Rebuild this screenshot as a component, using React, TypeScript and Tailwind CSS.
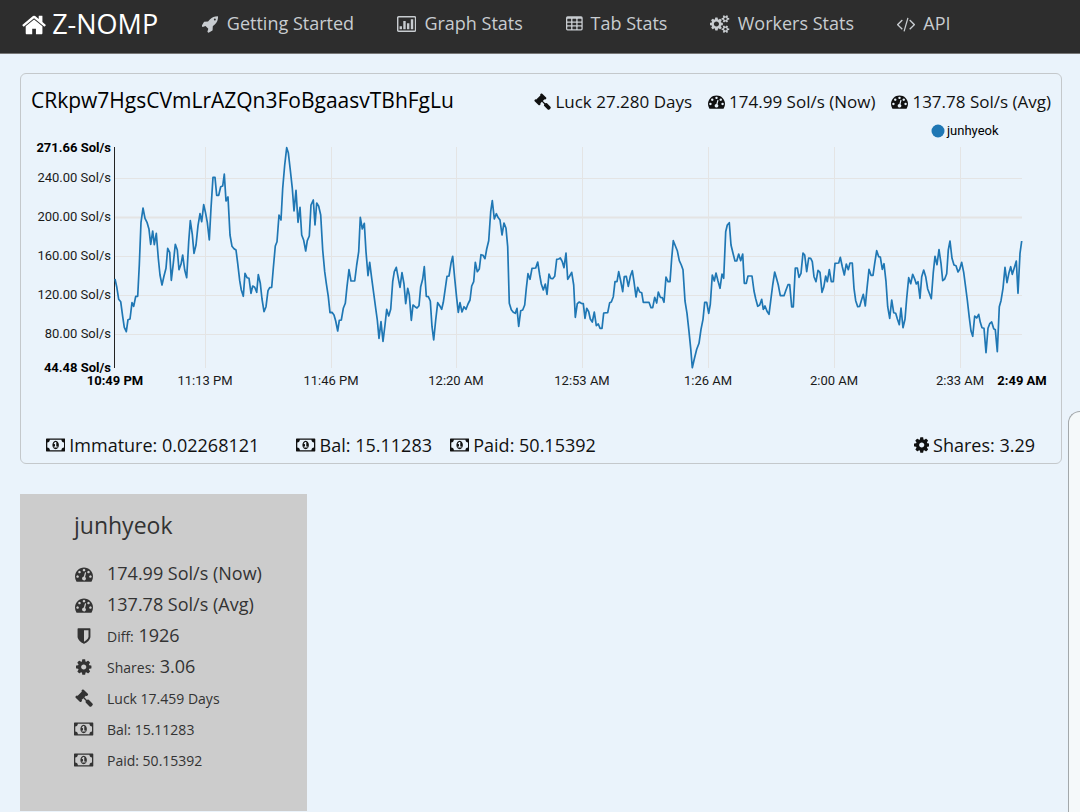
import type { ReactNode } from "react";

type Glyph = { box: string; d: string };

const cell = (x: number, y: number) => `M${x + 32} ${y}h320q32 0 32 32v192q0 32-32 32h-320q-32 0-32-32v-192q0-32 32-32z`;

const icons = {
  home: {
    box: "64 0 1664 1792",
    d: "M1472 992v480q0 26-19 45t-45 19h-384v-384h-256v384h-384q-26 0-45-19t-19-45v-480q0-1 .5-3t.5-3l575-474 575 474q1 2 1 6zm223-69l-62 74q-8 9-21 11h-3q-13 0-21-7l-692-577-692 577q-12 8-24 7-13-2-21-11l-62-74q-8-10-7-23.5t11-21.5l719-599q32-26 76-26t76 26l244 204v-195q0-14 9-23t23-9h192q14 0 23 9t9 23v408l219 182q10 8 11 21.5t-7 23.5z",
  },
  rocket: {
    box: "64 0 1664 1792",
    d: "M1440 448q0-40-28-68t-68-28-68 28-28 68 28 68 68 28 68-28 28-68zm224-288q0 249-75.5 430.5t-253.5 360.5q-81 80-195 176l-20 379q-2 16-16 26l-384 224q-7 4-16 4-12 0-23-9l-64-64q-13-14-8-32l85-276-281-281-276 85q-3 1-9 1-14 0-23-9l-64-64q-17-19-5-39l224-384q10-14 26-16l379-20q96-114 176-195 188-187 358-258t431-71q14 0 24 9.5t10 22.5z",
  },
  chart: {
    box: "0 0 1920 1792",
    d: "M160 96h1600q66 0 113 47t47 113v1280q0 66-47 113t-113 47h-1600q-66 0-113-47t-47-113v-1280q0-66 47-113t113-47zM176 240q-32 0-32 32v1248q0 32 32 32h1568q32 0 32-32v-1248q0-32-32-32zM256 1120h240v288h-240zM624 608h240v800h-240zM992 832h240v576h-240zM1376 416h240v992h-240z",
  },
  table: {
    box: "64 0 1664 1792",
    d:
      "M224 128h1344q160 0 160 160v1088q0 160-160 160h-1344q-160 0-160-160v-1088q0-160 160-160z" +
      [192, 704, 1216].map((x) => [384, 768, 1152].map((y) => cell(x, y)).join("")).join(""),
  },
  cogs: {
    box: "0 0 1920 1792",
    d: "M896 896q0-106-75-181t-181-75-181 75-75 181 75 181 181 75 181-75 75-181zm768 512q0-52-38-90t-90-38-90 38-38 90q0 53 37.5 90.5t90.5 37.5 90.5-37.5 37.5-90.5zm0-1024q0-52-38-90t-90-38-90 38-38 90q0 53 37.5 90.5t90.5 37.5 90.5-37.5 37.5-90.5zm-384 421v185q0 10-7 19.5t-16 10.5l-155 24q-11 35-32 76 34 48 90 115 7 11 7 20 0 12-7 19-23 30-82.5 89.5t-78.5 59.5q-11 0-21-7l-115-90q-37 19-77 31-11 108-23 155-7 24-30 24h-186q-11 0-20-7.5t-10-17.5l-23-153q-34-10-75-31l-118 89q-7 7-20 7-11 0-21-8-144-133-144-160 0-9 7-19 10-14 41-53t47-61q-23-44-35-82l-152-24q-10-1-17-9.5t-7-19.5v-185q0-10 7-19.5t16-10.5l155-24q11-35 32-76-34-48-90-115-7-11-7-20 0-12 7-20 22-30 82-89t79-59q11 0 21 7l115 90q34-18 77-32 11-108 23-154 7-24 30-24h186q11 0 20 7.5t10 17.5l23 153q34 10 75 31l118-89q8-7 20-7 11 0 21 8 144 133 144 160 0 8-7 19-12 16-42 54t-45 60q23 48 34 82l152 23q10 2 17 10.5t7 19.5zm640 533v140q0 16-149 31-12 27-30 52 51 113 51 138 0 4-4 7-122 71-124 71-8 0-46-47t-52-68q-20 2-30 2t-30-2q-14 21-52 68t-46 47q-2 0-124-71-4-3-4-7 0-25 51-138-18-25-30-52-149-15-149-31v-140q0-16 149-31 13-29 30-52-51-113-51-138 0-4 4-7 4-2 35-20t59-34 30-16q8 0 46 46.5t52 67.5q20-2 30-2t30 2q51-71 92-112l6-2q4 0 124 70 4 3 4 7 0 25-51 138 17 23 30 52 149 15 149 31zm0-1024v140q0 16-149 31-12 27-30 52 51 113 51 138 0 4-4 7-122 71-124 71-8 0-46-47t-52-68q-20 2-30 2t-30-2q-14 21-52 68t-46 47q-2 0-124-71-4-3-4-7 0-25 51-138-18-25-30-52-149-15-149-31v-140q0-16 149-31 13-29 30-52-51-113-51-138 0-4 4-7 4-2 35-20t59-34 30-16q8 0 46 46.5t52 67.5q20-2 30-2t30 2q51-71 92-112l6-2q4 0 124 70 4 3 4 7 0 25-51 138 17 23 30 52 149 15 149 31z",
  },
  code: {
    box: "0 0 1820 1792",
    d: "M553 1399l-50 50q-10 10-23 10t-23-10l-466-466q-10-10-10-23t10-23l466-466q10-10 23-10t23 10l50 50q10 10 10 23t-10 23l-393 393 393 393q10 10 10 23t-10 23zm591-1067l-373 1291q-4 13-15.5 19.5t-23.5 2.5l-62-17q-13-4-19.5-15.5t-2.5-24.5l373-1291q4-13 15.5-19.5t23.5-2.5l62 17q13 4 19.5 15.5t2.5 24.5zm657 651l-466 466q-10 10-23 10t-23-10l-50-50q-10-10-10-23t10-23l393-393-393-393q-10-10-10-23t10-23l50-50q10-10 23-10t23 10l466 466q10 10 10 23t-10 23z",
  },
  cog: {
    box: "128 0 1536 1792",
    d: "M1152 896q0-106-75-181t-181-75-181 75-75 181 75 181 181 75 181-75 75-181zm512-109v222q0 12-8 23t-20 13l-185 28q-19 54-39 91 35 50 107 138 10 12 10 25t-9 23q-27 37-99 108t-94 71q-12 0-26-9l-138-108q-44 23-91 38-16 136-29 186-7 28-36 28h-222q-14 0-24.5-8.5t-11.5-21.5l-28-184q-49-16-90-37l-141 107q-10 9-25 9-14 0-25-11-126-114-165-168-7-10-7-23 0-12 8-23 15-21 51-66.5t54-70.5q-27-50-41-99l-183-27q-13-2-21-12.5t-8-23.5v-222q0-12 8-23t19-13l186-28q14-46 39-92-40-57-107-138-10-12-10-24 0-10 9-23 26-36 98.5-107.5t94.5-71.5q13 0 26 10l138 107q44-23 91-38 16-136 29-186 7-28 36-28h222q14 0 24.5 8.5t11.5 21.5l28 184q49 16 90 37l142-107q9-9 24-9 13 0 25 10 129 119 165 170 7 8 7 22 0 12-8 23-15 21-51 66.5t-54 70.5q26 50 41 98l183 28q13 2 21 12.5t8 23.5z",
  },
  gavel: {
    box: "0 0 1792 1792",
    d: "M1771 1536q0 53-37 90l-107 108q-39 37-91 37-53 0-90-37l-363-364q-38-36-38-90 0-53 43-96l-256-256-126 126q-14 14-34 14t-34-14q2 2 12.5 12t12.5 13 10 11.5 10 13.5 6 13.5 5.5 16.5 1.5 18q0 38-28 68-3 3-16.5 18t-19 20.5-18.5 16.5-22 15.5-22 9-26 4.5q-40 0-68-28l-408-408q-28-28-28-68 0-13 4.5-26t9-22 15.5-22 16.5-18.5 20.5-19 18-16.5q30-28 68-28 10 0 18 1.5t16.5 5.5 13.5 6 13.5 10 11.5 10 13 12.5 12 12.5q-14-14-14-34t14-34l348-348q14-14 34-14t34 14q-2-2-12.5-12t-12.5-13-10-11.5-10-13.5-6-13.5-5.5-16.5-1.5-18q0-38 28-68 3-3 16.5-18t19-20.5 18.5-16.5 22-15.5 22-9 26-4.5q40 0 68 28l408 408q28 28 28 68 0 13-4.5 26t-9 22-15.5 22-16.5 18.5-20.5 19-18 16.5q-30 28-68 28-10 0-18-1.5t-16.5-5.5-13.5-6-13.5-10-11.5-10-13-12.5-12-12.5q14 14 14 34t-14 34l-126 126 256 256q43-43 96-43 52 0 91 37l363 363q37 39 37 91z",
  },
  gauge: {
    box: "0 0 1792 1792",
    d: "M384 1152q0-53-37.5-90.5t-90.5-37.5-90.5 37.5-37.5 90.5 37.5 90.5 90.5 37.5 90.5-37.5 37.5-90.5zm192-448q0-53-37.5-90.5t-90.5-37.5-90.5 37.5-37.5 90.5 37.5 90.5 90.5 37.5 90.5-37.5 37.5-90.5zm428 481l101-382q6-26-7.5-48.5t-38.5-29.5-48 6.5-30 39.5l-101 382q-60 5-107 43.5t-63 98.5q-20 77 20 146t117 89 146-20 89-117q16-60-6-117t-72-91zm660-33q0-53-37.5-90.5t-90.5-37.5-90.5 37.5-37.5 90.5 37.5 90.5 90.5 37.5 90.5-37.5 37.5-90.5zm-640-640q0-53-37.5-90.5t-90.5-37.5-90.5 37.5-37.5 90.5 37.5 90.5 90.5 37.5 90.5-37.5 37.5-90.5zm448 192q0-53-37.5-90.5t-90.5-37.5-90.5 37.5-37.5 90.5 37.5 90.5 90.5 37.5 90.5-37.5 37.5-90.5zm320 448q0 261-141 483-19 29-54 29h-1402q-35 0-54-29-141-221-141-483 0-182 71-348t191-286 286-191 348-71 348 71 286 191 191 286 71 348z",
  },
  shield: {
    box: "0 0 1792 1792",
    d: "M1344 960v-640h-448v1137q119-63 213-137 235-184 235-360zm192-768v768q0 86-33.5 170.5t-83 150-118 127.5-126.5 103-121 77.5-89.5 49.5-42.5 20q-12 6-26 6t-26-6q-16-7-42.5-20t-89.5-49.5-121-77.5-126.5-103-118-127.5-83-150-33.5-170.5v-768q0-26 19-45t45-19h1152q26 0 45 19t19 45z",
  },
  money: {
    box: "0 0 1920 1792",
    d: "M768 1152h384v-96h-128v-448h-114l-148 137 77 80q42-37 55-57h2v288h-128v96zm512-256q0 70-21 142t-59.5 134-101.5 101-138 39-138-39-101.5-101-59.5-134-21-142 21-142 59.5-134 101.5-101 138-39 138 39 101.5 101 59.5 134 21 142zm512 256v-512q-106 0-181-75t-75-181h-1152q0 106-75 181t-181 75v512q106 0 181 75t75 181h1152q0-106 75-181t181-75zm128-832v1152q0 26-19 45t-45 19h-1792q-26 0-45-19t-19-45v-1152q0-26 19-45t45-19h1792q26 0 45 19t19 45z",
  },
} satisfies Record<string, Glyph>;

type IconName = keyof typeof icons;

function Icon({ name, className = "h-[18px]" }: { name: IconName; className?: string }) {
  return (
    <svg viewBox={icons[name].box} className={`w-auto shrink-0 ${className}`} fill="currentColor" fillRule="evenodd" aria-hidden="true">
      <path d={icons[name].d} />
    </svg>
  );
}

const navLinks: { icon: IconName; label: string }[] = [
  { icon: "rocket", label: "Getting Started" },
  { icon: "chart", label: "Graph Stats" },
  { icon: "table", label: "Tab Stats" },
  { icon: "cogs", label: "Workers Stats" },
  { icon: "code", label: "API" },
];

// Hashrate samples, one block per hour; each block has its own horizontal origin.
const series: { start: number; samples: string }[] = [
  {
    start: 0,
    samples:
      "285,432 290,455 296,493 302,500 308,545 313,577 319,590 324,554 330,552 336,503 341,514 347,484 353,484 358,390 363,262 369,219 375,250 381,262 387,283 392,328 398,288 403,329 409,295 415,370 420,420 426,450 432,423 438,400 443,340 449,352 454,436 460,385 466,328 472,345 477,404 483,388 488,360 494,405 500,428 506,320 511,257 517,298 522,355 528,330 534,272 540,236 545,260 551,209 556,230 562,262 568,315 573,220 579,127 585,127 590,181 596,181 602,155 608,153 613,117 618,198 624,186 630,300 636,334 642,341 648,345 653,385 659,437 664,465 670,484 675,415 681,428 687,430 693,475 698,453 704,457 710,472 715,419 721,445 726,492 732,530 738,515 744,467 749,458",
  },
  {
    start: 750,
    samples:
      "5,457 10,400 16,333 21,320 27,240 33,255 38,160 44,90 50,38 55,53 61,105 67,160 72,228 78,166 84,262 90,217 95,300 101,316 107,348 112,317 118,303 123,210 130,195 135,270 140,204 146,214 152,240 158,345 164,410 169,445 175,485 180,533 186,532 192,540 197,558 203,588 208,556 214,555 220,520 226,505 231,455 237,404 243,438 254,438 260,390 266,350 271,247 277,282 283,265 288,350 294,422 299,382 305,430 311,475 317,520 322,555 327,610 333,560 339,619 345,570 350,523 356,543 362,523 368,440 373,410 379,397 385,430 390,457 396,413 402,447 407,506 413,460 418,480 424,556 429,510 435,515 441,519 447,512 452,455 458,432 463,395 469,484 475,485 481,498 486,575 491,615 497,555 503,503 509,512 515,523 520,502 526,460 531,424 537,423 543,385 548,364 554,430 560,490 565,532 570,503 576,531 582,515 588,523 594,507 600,495 605,453 611,440 616,382 622,410 628,402 633,359 639,361 645,371 650,342 656,317 662,230 667,197 673,252 679,236 684,247 690,255 696,300 702,264 708,280 713,335 718,505 724,524 730,532 736,535 741,520 746,574",
  },
  {
    start: 1500,
    samples:
      "2,527 8,525 14,510 19,460 24,416 30,433 36,400 47,399 53,381 59,420 64,447 70,465 76,447 81,478 87,417 92,430 98,431 104,424 110,373 116,372 121,369 127,380 132,398 138,354 143,433 149,423 155,412 161,450 166,547 172,506 178,501 184,505 190,506 195,550 200,520 206,530 211,552 217,561 223,531 229,572 235,567 240,580 246,580 251,534 263,533 269,503 274,501 280,485 285,440 291,440 296,410 302,438 308,470 313,425 319,424 325,454 331,424 337,407 342,440 348,486 353,457 359,471 365,473 370,502 387,502 393,518 398,518 404,487 410,504 415,471 421,487 427,488 432,502 438,426 444,440 450,440 455,370 460,317 466,332 472,347 478,377 484,390 489,404 495,498 501,535 507,590 512,640 517,698 523,672 530,643 537,625 543,583 549,553 554,502 560,502 566,535 571,508 577,420 583,438 588,414 594,438 600,460 606,417 611,430 617,290 622,270 628,263 633,330 639,355 645,378 650,378 656,357 662,377 668,357 673,445 679,445 684,423 696,423 702,468 707,491 713,514 719,510 725,493 730,523 735,513 741,529 747,538",
  },
  {
    start: 2250,
    samples:
      "3,490 8,450 14,411 20,432 25,450 31,482 42,482 48,465 54,449 59,449 65,516 70,516 76,399 82,399 87,427 93,415 99,354 104,360 110,410 116,369 122,370 127,380 132,425 138,440 144,406 150,412 156,472 161,457 167,423 172,440 178,404 184,440 190,440 195,385 206,384 211,367 217,395 223,420 229,387 235,404 240,384 247,384 252,460 257,497 263,515 269,514 274,497 280,478 286,513 291,460 297,403 303,421 309,421 314,385 320,347 326,365 331,366 337,403 342,386 348,440 353,515 359,550 365,495 371,533 377,535 382,551 388,569 393,519 399,578 405,553 410,490 416,428 422,446 428,418 434,432 439,447 444,440 450,490 455,425 461,405 467,425 473,462 479,478 484,491 490,412 495,364 501,389 507,344 513,385 518,437 524,432 530,416 535,345 540,318 546,370 552,390 558,392 564,411 569,403 575,382 581,412 587,458 592,495 598,548 603,588 608,604 614,543 620,549 626,538 631,562 636,578 642,580 648,653 654,580 659,566 665,561 671,581 676,584 682,650 688,515 693,497 699,460 705,397 711,443 717,413 722,395 727,418 733,398 739,378 744,475 750,355 755,318",
  },
];

const linePoints = series
  .flatMap(({ start, samples }) =>
    samples.split(" ").map((pair) => {
      const [x, y] = pair.split(",").map(Number);
      return `${((x + start) / 3).toFixed(1)},${(y / 3 + 17).toFixed(1)}`;
    }),
  )
  .join(" ");

const yTicks = [
  { y: 60, label: "240.00 Sol/s" },
  { y: 99, label: "200.00 Sol/s" },
  { y: 138, label: "160.00 Sol/s" },
  { y: 177, label: "120.00 Sol/s" },
  { y: 216, label: "80.00 Sol/s" },
];

const xTicks = [
  { x: 185, label: "11:13 PM" },
  { x: 311, label: "11:46 PM" },
  { x: 436, label: "12:20 AM" },
  { x: 562, label: "12:53 AM" },
  { x: 688, label: "1:26 AM" },
  { x: 814, label: "2:00 AM" },
  { x: 940, label: "2:33 AM" },
];

function HashrateChart() {
  return (
    <svg viewBox="1 0 1040 290" className="block h-auto w-full font-[Roboto,sans-serif] text-[13px]" role="img" aria-label="Hashrate history">
      <g stroke="#e4e4e4" strokeWidth="1">
        {yTicks.map((t) => (
          <line key={t.label} x1="95" x2="1002" y1={t.y + 0.5} y2={t.y + 0.5} strokeWidth={t.y === 99 ? 2 : 1} />
        ))}
        {xTicks.map((t) => (
          <line key={t.label} x1={t.x + 0.5} x2={t.x + 0.5} y1="29" y2="250" />
        ))}
      </g>
      <line x1="94.5" x2="94.5" y1="29" y2="250" stroke="#222" />
      <g textAnchor="end" fill="#1a1a1a">
        {yTicks.map((t) => (
          <text key={t.label} x="91" y={t.y + 4}>
            {t.label}
          </text>
        ))}
        <g className="font-bold" fill="#000">
          <text x="91" y="34">271.66 Sol/s</text>
          <text x="91" y="254">44.48 Sol/s</text>
        </g>
      </g>
      <g textAnchor="middle" fill="#1a1a1a">
        {xTicks.map((t) => (
          <text key={t.label} x={t.x} y="267">
            {t.label}
          </text>
        ))}
        <g className="font-bold" fill="#000">
          <text x="95" y="267">10:49 PM</text>
          <text x="1002" y="267">2:49 AM</text>
        </g>
      </g>
      <polyline points={linePoints} fill="none" stroke="#1f77b4" strokeWidth="1.7" strokeLinejoin="round" />
      <circle cx="918" cy="13" r="6.5" fill="#1f77b4" />
      <text x="927" y="17">junhyeok</text>
    </svg>
  );
}

function Stat({ icon, iconClass, children }: { icon: IconName; iconClass?: string; children: ReactNode }) {
  return (
    <span className="flex items-center gap-1 whitespace-nowrap">
      <Icon name={icon} className={iconClass} />
      {children}
    </span>
  );
}

function WorkerRow({ icon, children }: { icon: IconName; children: ReactNode }) {
  return (
    <li className="flex h-[31px] items-center gap-[13px]">
      <span className="flex w-5 justify-center">
        <Icon name={icon} />
      </span>
      <span>{children}</span>
    </li>
  );
}

export default function App() {
  return (
    <div className="min-h-screen bg-[#eaf3fb] font-['Open_Sans',sans-serif] text-[17px] text-black">
      <header className="flex h-[54px] items-center border-b border-[#777] bg-[#2d2d2d] pb-[6px] pl-[22px] text-[18px] text-[#c8ccd0]">
        <a href="#" className="mr-[44px] flex items-center gap-[6px] pt-[2px] text-[27px] text-white">
          <Icon name="home" className="h-[26px]" />
          Z-NOMP
        </a>
        <nav className="flex items-center gap-[43px]">
          {navLinks.map((link) => (
            <a key={link.label} href="#" className="flex items-center gap-2 whitespace-nowrap">
              <Icon name={link.icon} className="h-[18px]" />
              {link.label}
            </a>
          ))}
        </nav>
      </header>

      <main className="pt-[19px] pr-[18px] pl-5">
        <section className="rounded-md border border-[#c4c8cb]">
          <div className="flex h-[44px] items-center justify-between px-[10px] pt-[9px]">
            <h1 className="text-[21px]">CRkpw7HgsCVmLrAZQn3FoBgaasvTBhFgLu</h1>
            <div className="flex gap-4 pt-[2px] text-[#111]">
              <Stat icon="gavel" iconClass="h-[17px]">Luck 27.280 Days</Stat>
              <Stat icon="gauge" iconClass="h-[17px]">174.99 Sol/s (Now)</Stat>
              <Stat icon="gauge" iconClass="h-[17px]">137.78 Sol/s (Avg)</Stat>
            </div>
          </div>
          <HashrateChart />
          <div className="flex h-[55px] items-center pt-[20px] pr-[26px] pb-[1px] pl-[25px] text-[18px] text-[#111]">
            <span className="mr-[37px]">
              <Stat icon="money">Immature: 0.02268121</Stat>
            </span>
            <span className="mr-[18px]">
              <Stat icon="money">Bal: 15.11283</Stat>
            </span>
            <Stat icon="money">Paid: 50.15392</Stat>
            <span className="ml-auto">
              <Stat icon="cog">Shares: 3.29</Stat>
            </span>
          </div>
        </section>

        <section className="mt-[30px] h-[317px] w-[287px] bg-[#ccc] pt-[15px] pl-[54px] text-[18px] text-[#333]">
          <h2 className="text-[23px] leading-8">junhyeok</h2>
          <ul className="mt-[17px]">
            <WorkerRow icon="gauge">174.99 Sol/s (Now)</WorkerRow>
            <WorkerRow icon="gauge">137.78 Sol/s (Avg)</WorkerRow>
            <WorkerRow icon="shield">
              <small className="text-[14px]">Diff:</small> 1926
            </WorkerRow>
            <WorkerRow icon="cog">
              <small className="text-[14px]">Shares:</small> 3.06
            </WorkerRow>
            <WorkerRow icon="gavel">
              <small className="text-[14px]">Luck 17.459 Days</small>
            </WorkerRow>
            <WorkerRow icon="money">
              <small className="text-[14px]">Bal: 15.11283</small>
            </WorkerRow>
            <WorkerRow icon="money">
              <small className="text-[14px]">Paid: 50.15392</small>
            </WorkerRow>
          </ul>
        </section>
      </main>

      <aside className="fixed right-0 bottom-0 h-[401px] w-3 rounded-tl-[16px] border-t border-l border-[#a3a8ab] bg-[#f5f9fa]" />
    </div>
  );
}
